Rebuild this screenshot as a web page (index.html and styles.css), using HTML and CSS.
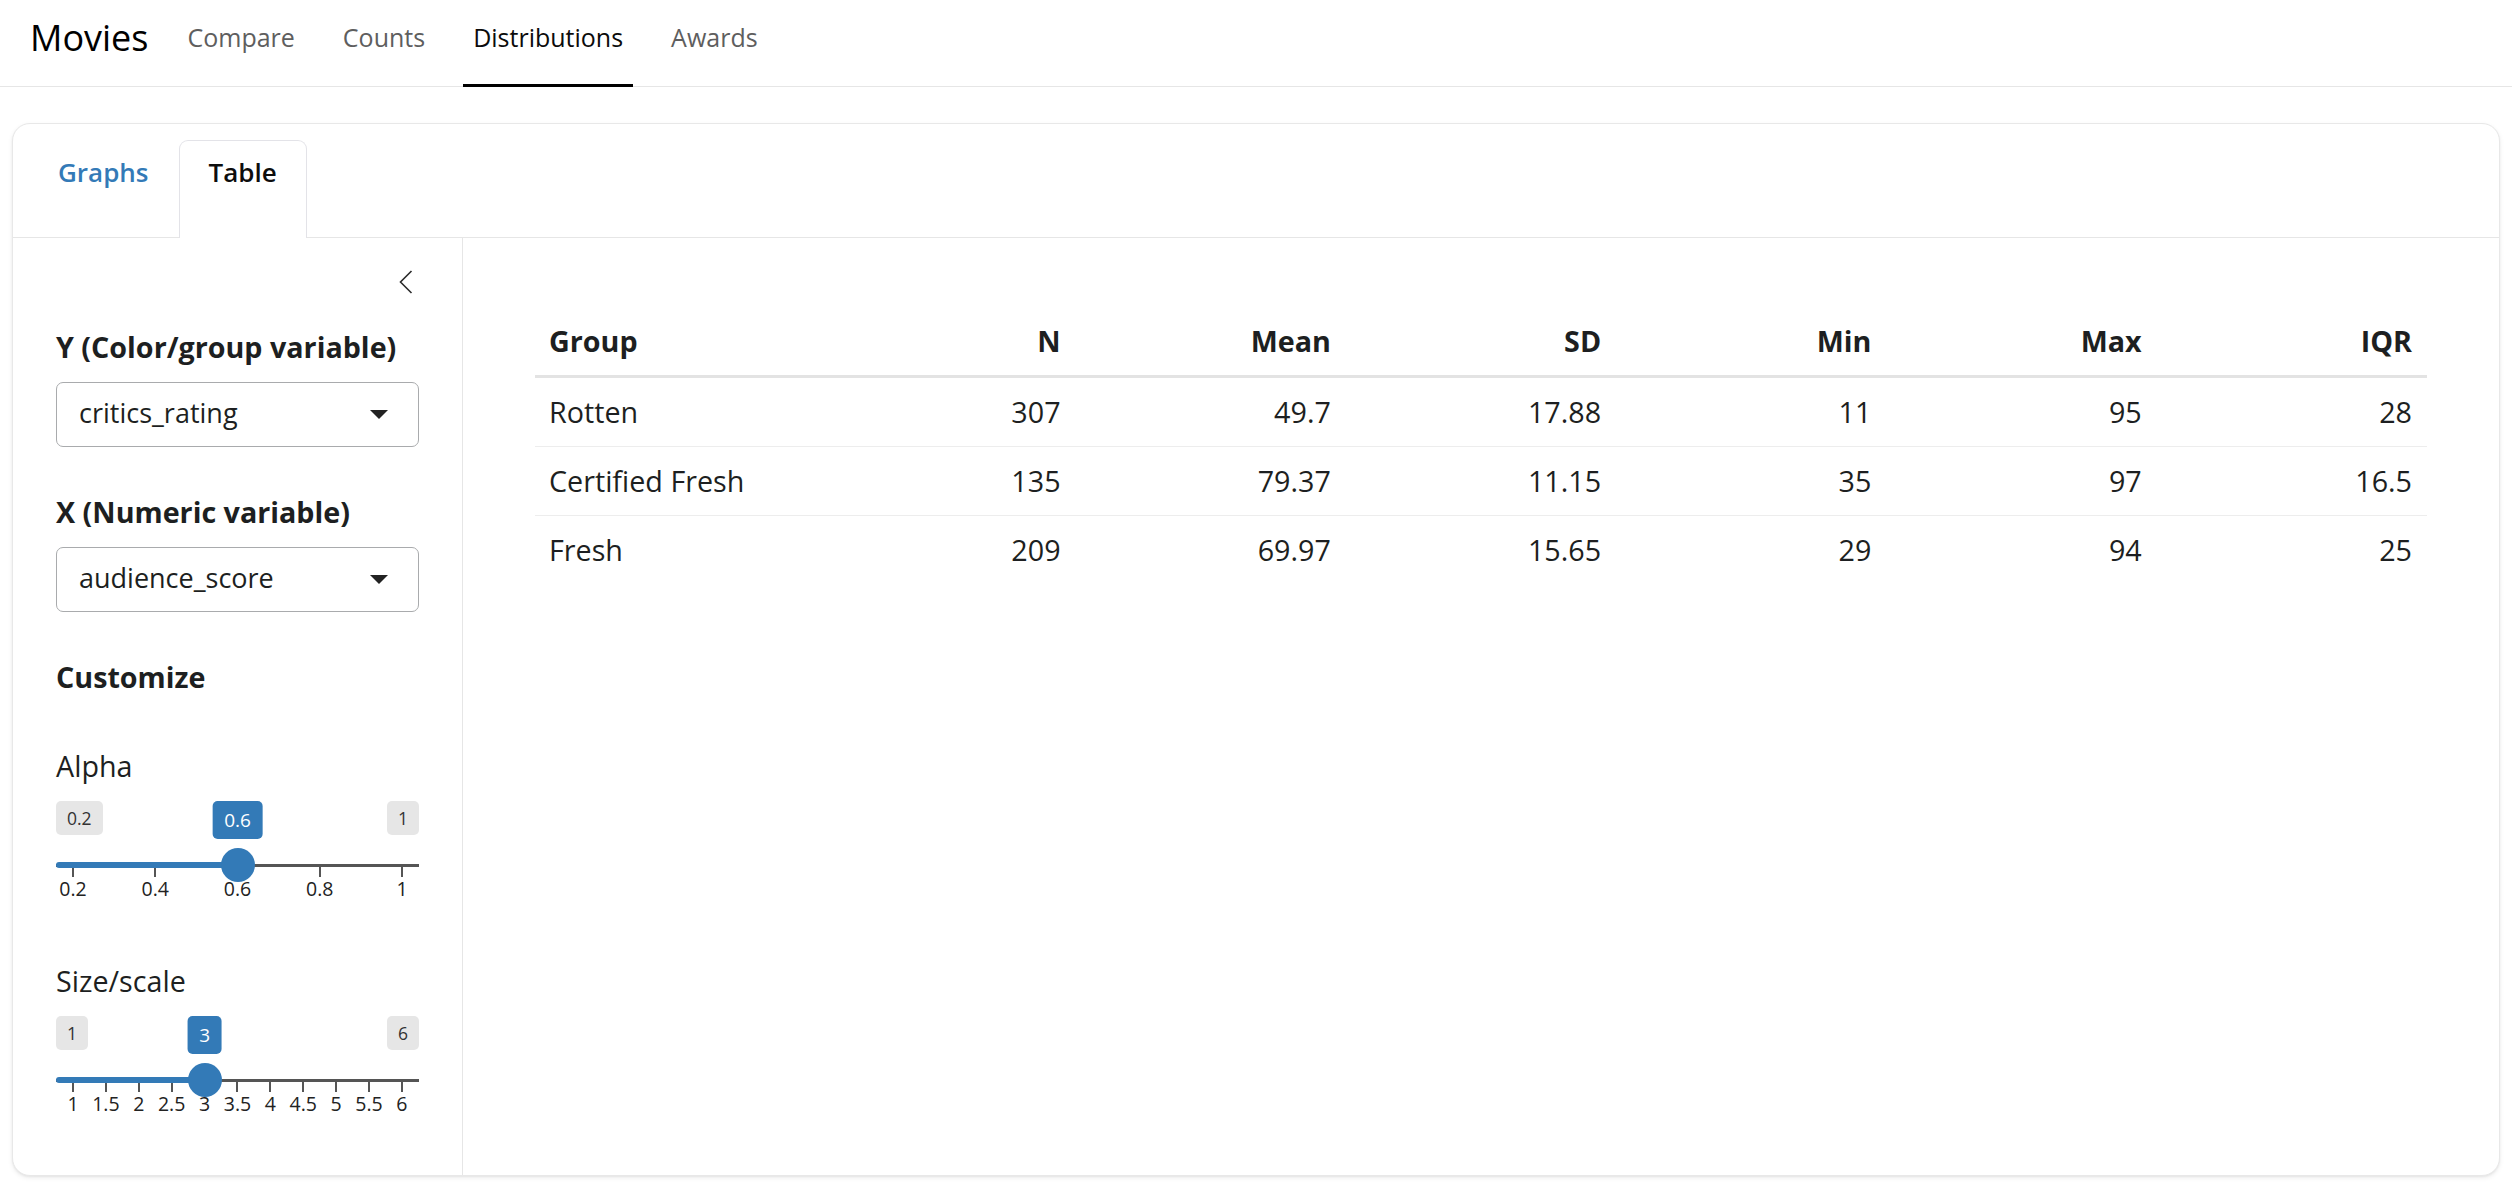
FILE: index.html
```html
<!DOCTYPE html>
<html lang="en">
<head>
<meta charset="utf-8">
<title>Movies</title>
<link rel="stylesheet" href="styles.css">
</head>
<body>
<nav class="navbar">
  <span class="brand">Movies</span>
  <ul class="nav">
    <li><a class="nav-link">Compare</a></li>
    <li><a class="nav-link">Counts</a></li>
    <li><a class="nav-link active">Distributions</a></li>
    <li><a class="nav-link">Awards</a></li>
  </ul>
</nav>
<div class="page">
  <section class="card">
    <div class="card-header">
      <ul class="tabs">
        <li class="tab">Graphs</li>
        <li class="tab active">Table</li>
      </ul>
    </div>
    <div class="layout">
      <aside class="sidebar">
        <div class="collapse-row">
          <button class="collapse-btn" aria-label="Collapse sidebar">
            <svg width="14" height="24" viewBox="0 0 14 24"><path d="M12.5 1 L1.5 12 L12.5 23" fill="none" stroke="#2b2b2b" stroke-width="1.6"/></svg>
          </button>
        </div>
        <div class="field">
          <label class="field-label">Y (Color/group variable)</label>
          <div class="select"><span>critics_rating</span><svg class="caret" width="18" height="9" viewBox="0 0 18 9"><path d="M0 0 H18 L9 9 Z" fill="#222"/></svg></div>
        </div>
        <div class="field">
          <label class="field-label">X (Numeric variable)</label>
          <div class="select"><span>audience_score</span><svg class="caret" width="18" height="9" viewBox="0 0 18 9"><path d="M0 0 H18 L9 9 Z" fill="#222"/></svg></div>
        </div>
        <h4 class="section-title">Customize</h4>
        <div class="slider-field">
          <div class="slider-label">Alpha</div>
          <div class="slider" style="--p:0.5">
            <div class="bounds"><span class="bound">0.2</span><span class="bound">1</span></div>
            <span class="value-tag">0.6</span>
            <div class="track"><div class="bar"></div><div class="handle"></div></div>
            <div class="grid">
              <span class="tick"><i></i><b>0.2</b></span>
              <span class="tick"><i></i><b>0.4</b></span>
              <span class="tick"><i></i><b>0.6</b></span>
              <span class="tick"><i></i><b>0.8</b></span>
              <span class="tick"><i></i><b>1</b></span>
            </div>
          </div>
        </div>
        <div class="slider-field">
          <div class="slider-label">Size/scale</div>
          <div class="slider" style="--p:0.4">
            <div class="bounds"><span class="bound">1</span><span class="bound">6</span></div>
            <span class="value-tag">3</span>
            <div class="track"><div class="bar"></div><div class="handle"></div></div>
            <div class="grid">
              <span class="tick"><i></i><b>1</b></span>
              <span class="tick"><i></i><b>1.5</b></span>
              <span class="tick"><i></i><b>2</b></span>
              <span class="tick"><i></i><b>2.5</b></span>
              <span class="tick"><i></i><b>3</b></span>
              <span class="tick"><i></i><b>3.5</b></span>
              <span class="tick"><i></i><b>4</b></span>
              <span class="tick"><i></i><b>4.5</b></span>
              <span class="tick"><i></i><b>5</b></span>
              <span class="tick"><i></i><b>5.5</b></span>
              <span class="tick"><i></i><b>6</b></span>
            </div>
          </div>
        </div>
      </aside>
      <div class="main">
        <table class="stats">
          <thead>
            <tr><th class="left">Group</th><th>N</th><th>Mean</th><th>SD</th><th>Min</th><th>Max</th><th>IQR</th></tr>
          </thead>
          <tbody>
            <tr><td class="left">Rotten</td><td>307</td><td>49.7</td><td>17.88</td><td>11</td><td>95</td><td>28</td></tr>
            <tr><td class="left">Certified Fresh</td><td>135</td><td>79.37</td><td>11.15</td><td>35</td><td>97</td><td>16.5</td></tr>
            <tr><td class="left">Fresh</td><td>209</td><td>69.97</td><td>15.65</td><td>29</td><td>94</td><td>25</td></tr>
          </tbody>
        </table>
      </div>
    </div>
  </section>
</div>
</body>
</html>
```

FILE: styles.css
```css
* { box-sizing: border-box; }

html, body {
  margin: 0;
  height: 100%;
}

body {
  font-family: "Open Sans", "Liberation Sans", sans-serif;
  color: #1d1f21;
  background: #fff;
  display: flex;
  flex-direction: column;
  font-size: 28.7px;
  line-height: 1.5;
}

/* ---------- navbar ---------- */
.navbar {
  display: flex;
  align-items: flex-start;
  height: 87px;
  padding: 0 30px;
  border-bottom: 1px solid #e6e6e6;
  flex: none;
}

.brand {
  font-size: 36px;
  line-height: 54px;
  padding-top: 11px;
  color: #000;
  margin-right: 29px;
}

.nav {
  display: flex;
  gap: 28px;
  list-style: none;
  margin: 0;
  padding: 0;
  height: 87px;
}

.nav li { display: flex; }

.nav-link {
  display: block;
  font-size: 25px;
  line-height: 38px;
  padding: 18px 10px 0;
  color: #5e5e5e;
  border-bottom: 3px solid transparent;
  height: 87px;
}

.nav-link.active {
  color: #0b0b0b;
  border-bottom-color: #000;
}

/* ---------- page / card ---------- */
.page {
  flex: 1;
  display: flex;
  flex-direction: column;
  padding: 36px 12px 27px;
}

.card {
  flex: 1;
  display: flex;
  flex-direction: column;
  border: 1px solid #e8e8e8;
  border-radius: 18px;
  background: #fff;
  box-shadow: 0 2px 5px rgba(0, 0, 0, 0.07), 0 1px 2px rgba(0, 0, 0, 0.05);
  overflow: hidden;
}

.card-header {
  border-bottom: 1px solid #e6e6e6;
  padding: 16px 16px 0 15px;
  height: 114px;
}

.tabs {
  display: flex;
  list-style: none;
  margin: 0;
  padding: 0;
  gap: 0;
}

.tab {
  font-size: 26px;
  font-weight: 600;
  line-height: 39px;
  padding: 12px 29px 46px;
  color: #337ab7;
  border: 1px solid transparent;
  border-bottom: none;
  border-radius: 9px 9px 0 0;
}

.tab.active {
  color: #0d0d0d;
  background: #fff;
  border-color: #e3e3e8;
  position: relative;
  z-index: 1;
}

.layout {
  flex: 1;
  display: flex;
  min-height: 0;
}

/* ---------- sidebar ---------- */
.sidebar {
  width: 450px;
  flex: none;
  border-right: 1px solid #e6e6e6;
  padding: 32px 43px 0 43px;
  display: flex;
  flex-direction: column;
}

.collapse-row {
  display: flex;
  justify-content: flex-end;
  height: 24px;
  margin-bottom: 32px;
}

.collapse-btn {
  border: none;
  background: none;
  padding: 0;
  margin-right: 6px;
  display: flex;
}

.field {
  margin-bottom: 44px;
}

.field-label {
  display: block;
  font-weight: 700;
  font-size: 28.7px;
  line-height: 42px;
  margin-bottom: 14px;
}

.select {
  height: 65px;
  border: 1px solid #a9abad;
  border-radius: 7px;
  display: flex;
  align-items: center;
  justify-content: space-between;
  padding: 0 30px 0 22px;
  font-size: 27px;
  color: #1d1f21;
}

.select span { padding-bottom: 2px; }

.section-title {
  margin: 0 0 47px;
  font-size: 28.7px;
  line-height: 42px;
  font-weight: 700;
}

.slider-field {
  margin-bottom: 59px;
}

.slider-label {
  font-size: 28.7px;
  line-height: 42px;
  margin-bottom: 14px;
}

.slider {
  position: relative;
}

.bounds {
  display: flex;
  justify-content: space-between;
}

.bound {
  background: #e6e6e6;
  color: #333;
  font-size: 17.5px;
  line-height: 26px;
  padding: 4px 11px;
  border-radius: 5px;
}

.value-tag {
  position: absolute;
  top: 0;
  left: calc(17px + var(--p) * (100% - 34px));
  transform: translateX(-50%);
  background: #337ab7;
  color: #fff;
  font-size: 19px;
  line-height: 28px;
  padding: 5px 12px;
  border-radius: 5px;
}

.track {
  position: relative;
  height: 34px;
  margin-top: 13px;
}

.track::before {
  content: "";
  position: absolute;
  left: 0;
  right: 0;
  top: 16px;
  height: 3px;
  background: #555;
}

.bar {
  position: absolute;
  left: 0;
  top: 14px;
  height: 6px;
  border-radius: 3px;
  width: calc(17px + var(--p) * (100% - 34px));
  background: #337ab7;
}

.handle {
  position: absolute;
  top: 0;
  left: calc(var(--p) * (100% - 34px));
  width: 34px;
  height: 34px;
  border-radius: 50%;
  background: #337ab7;
}

.grid {
  display: flex;
  justify-content: space-between;
  padding: 0 17px;
  margin-top: -15px;
}

.tick {
  width: 0;
  display: flex;
  flex-direction: column;
  align-items: center;
}

.tick i {
  display: block;
  width: 2px;
  height: 10px;
  background: #555;
  flex: none;
}

.tick b {
  font-weight: 400;
  font-size: 19.5px;
  line-height: 24px;
  white-space: nowrap;
  color: #222;
}

/* ---------- main / table ---------- */
.main {
  flex: 1;
  padding: 69px 72px;
}

.stats {
  width: 100%;
  table-layout: fixed;
  border-collapse: collapse;
  font-size: 28.7px;
  line-height: 42px;
}

.stats th,
.stats td {
  text-align: right;
  padding: 13px 15px 13px 14px;
}

.stats th {
  font-weight: 700;
  border-bottom: 3px solid #e3e3e3;
}

.stats td {
  border-bottom: 1px solid #ededed;
}

.stats tbody tr:last-child td {
  border-bottom: none;
}

.stats .left {
  text-align: left;
}
```
